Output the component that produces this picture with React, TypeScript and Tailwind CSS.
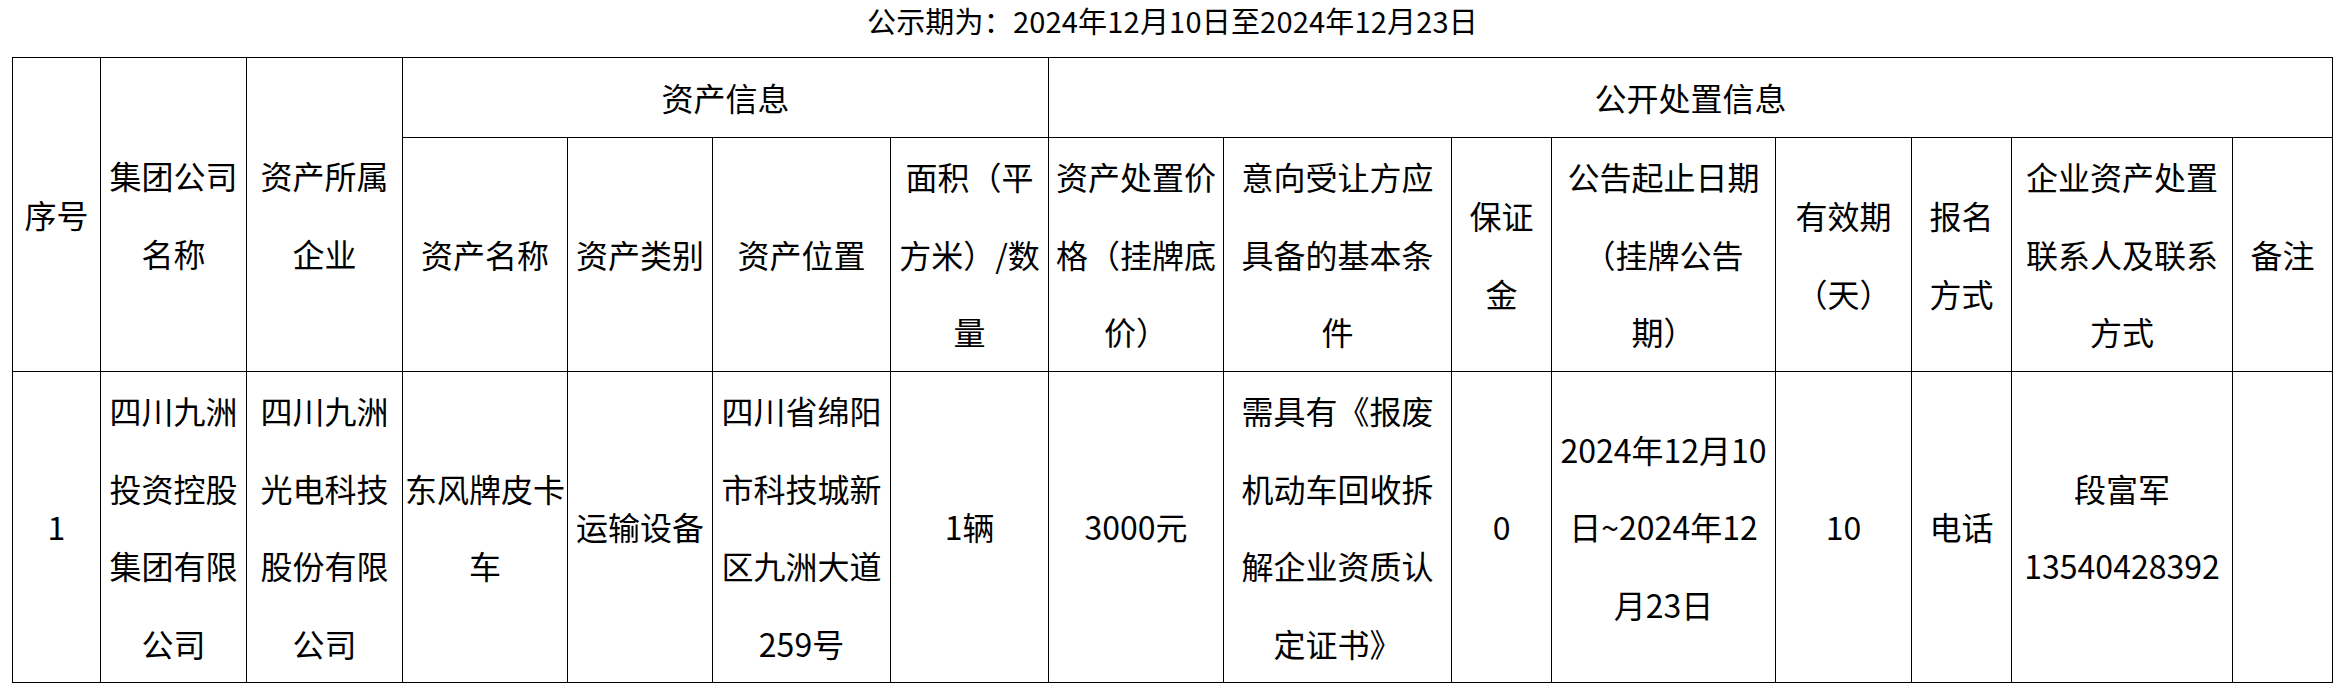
import React from "react";

function Lines({ items }: { items: string[] }) {
  return (
    <>
      {items.map((t, i) => (
        <React.Fragment key={i}>
          {i > 0 && <br />}
          {t}
        </React.Fragment>
      ))}
    </>
  );
}

const cell =
  "border border-black p-0 text-center align-middle whitespace-nowrap font-normal";

export default function App() {
  const row2: string[][] = [
    ["资产名称"],
    ["资产类别"],
    ["资产位置"],
    ["面积（平", "方米）/数", "量"],
    ["资产处置价", "格（挂牌底", "价）"],
    ["意向受让方应", "具备的基本条", "件"],
    ["保证", "金"],
    ["公告起止日期", "（挂牌公告", "期）"],
    ["有效期", "（天）"],
    ["报名", "方式"],
    ["企业资产处置", "联系人及联系", "方式"],
    ["备注"],
  ];
  const body: string[][] = [
    ["1"],
    ["四川九洲", "投资控股", "集团有限", "公司"],
    ["四川九洲", "光电科技", "股份有限", "公司"],
    ["东风牌皮卡", "车"],
    ["运输设备"],
    ["四川省绵阳", "市科技城新", "区九洲大道", "259号"],
    ["1辆"],
    ["3000元"],
    ["需具有《报废", "机动车回收拆", "解企业资质认", "定证书》"],
    ["0"],
    ["2024年12月10", "日~2024年12", "月23日"],
    ["10"],
    ["电话"],
    ["段富军", "13540428392"],
    [""],
  ];
  return (
    <div
      className="w-[2345px] h-[691px] bg-white text-black overflow-hidden"
      style={{ fontFamily: '"Noto Sans CJK SC", "Noto Sans", sans-serif' }}
    >
      <div className="h-[57px] text-center text-[29px] leading-[40px] tracking-[0.2px]">
        公示期为：2024年12月10日至2024年12月23日
      </div>
      <table className="ml-[12px] w-[2320px] table-fixed border-collapse text-[32px] leading-[77.5px]">
        <colgroup>
          <col className="w-[88px]" />
          <col className="w-[146px]" />
          <col className="w-[156px]" />
          <col className="w-[165px]" />
          <col className="w-[145px]" />
          <col className="w-[178px]" />
          <col className="w-[158px]" />
          <col className="w-[175px]" />
          <col className="w-[228px]" />
          <col className="w-[100px]" />
          <col className="w-[224px]" />
          <col className="w-[136px]" />
          <col className="w-[100px]" />
          <col className="w-[221px]" />
          <col className="w-[100px]" />
        </colgroup>
        <thead>
          <tr className="h-[80px]">
            <th rowSpan={2} className={cell}>
              序号
            </th>
            <th rowSpan={2} className={cell}>
              <Lines items={["集团公司", "名称"]} />
            </th>
            <th rowSpan={2} className={cell}>
              <Lines items={["资产所属", "企业"]} />
            </th>
            <th colSpan={4} className={cell + " h-[80px]"}>
              资产信息
            </th>
            <th colSpan={8} className={cell + " h-[80px]"}>
              公开处置信息
            </th>
          </tr>
          <tr className="h-[234px]">
            {row2.map((c, i) => (
              <th key={i} className={cell + " h-[234px]"}>
                <Lines items={c} />
              </th>
            ))}
          </tr>
        </thead>
        <tbody>
          <tr className="h-[310px]">
            {body.map((c, i) => (
              <td key={i} className={cell + " h-[310px]"}>
                <Lines items={c} />
              </td>
            ))}
          </tr>
        </tbody>
      </table>
    </div>
  );
}
